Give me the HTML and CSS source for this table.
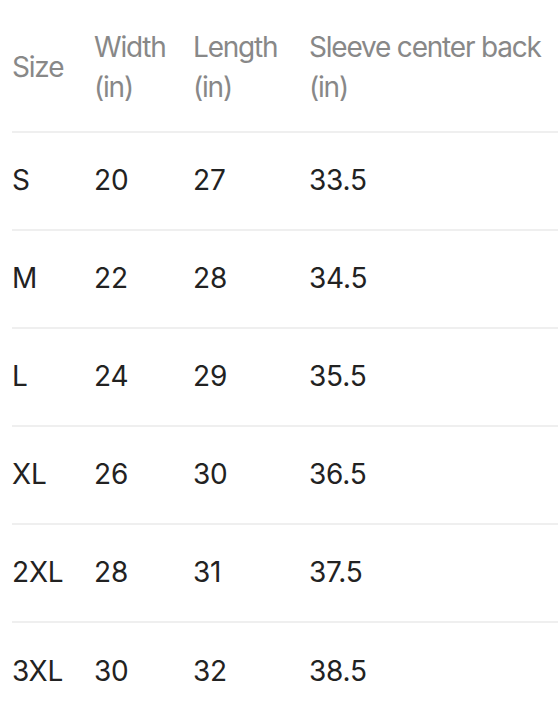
FILE: index.html
```html
<!DOCTYPE html>
<html>
<head>
<meta charset="utf-8">
<link rel="stylesheet" href="styles.css">
</head>
<body>
<div class="chart">
  <div class="row head">
    <div class="cell">Size</div>
    <div class="cell">Width (in)</div>
    <div class="cell">Length (in)</div>
    <div class="cell">Sleeve center back (in)</div>
  </div>
  <div class="row"><div class="cell">S</div><div class="cell">20</div><div class="cell">27</div><div class="cell">33.5</div></div>
  <div class="row"><div class="cell">M</div><div class="cell">22</div><div class="cell">28</div><div class="cell">34.5</div></div>
  <div class="row"><div class="cell">L</div><div class="cell">24</div><div class="cell">29</div><div class="cell">35.5</div></div>
  <div class="row"><div class="cell">XL</div><div class="cell">26</div><div class="cell">30</div><div class="cell">36.5</div></div>
  <div class="row"><div class="cell">2XL</div><div class="cell">28</div><div class="cell">31</div><div class="cell">37.5</div></div>
  <div class="row"><div class="cell">3XL</div><div class="cell">30</div><div class="cell">32</div><div class="cell">38.5</div></div>
</div>
</body>
</html>
```
FILE: styles.css
```css
html, body {
  margin: 0;
  padding: 0;
  background: #ffffff;
}
body {
  font-family: "Inter", "Liberation Sans", sans-serif;
  font-size: 28px;
  letter-spacing: -0.2px;
  color: #222222;
  overflow: hidden;
}
.chart {
  padding-left: 12px;
}
.row {
  display: grid;
  grid-template-columns: 82px 99px 116px 1fr;
  align-items: center;
  height: 98px;
  padding-bottom: 3px;
  border-bottom: 2px solid #efefef;
  box-sizing: border-box;
}
.row:last-child {
  border-bottom: none;
}
.row.head {
  height: 133px;
  padding-top: 2px;
  padding-bottom: 0;
  color: #888888;
  letter-spacing: -1.2px;
}
.cell {
  line-height: 40px;
}
```
